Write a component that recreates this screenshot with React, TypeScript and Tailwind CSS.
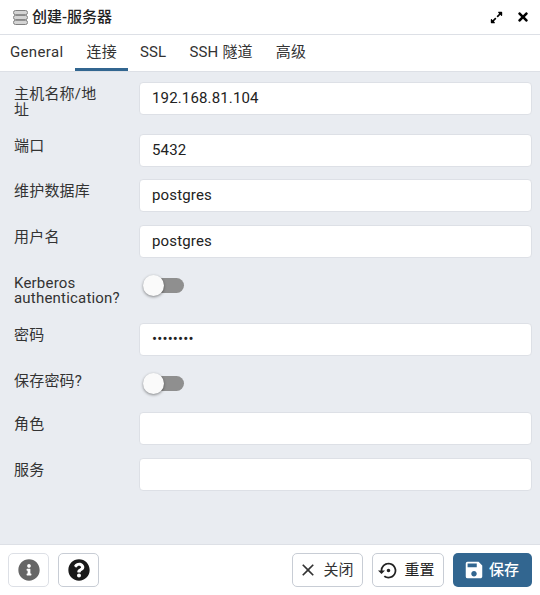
import { useState } from "react";
import { FaExpandAlt, FaTimes, FaInfoCircle, FaQuestionCircle } from "react-icons/fa";
import { MdClose, MdSave, MdSettingsBackupRestore } from "react-icons/md";

const font = "font-['Roboto','Noto_Sans_CJK_SC',sans-serif]";

function Field({ label, value, mb, type = "text" }: { label: string; value?: string; mb: string; type?: string }) {
  return (
    <div className={`flex items-start pl-[14px] pr-2 ${mb}`}>
      <label className="mr-[35px] w-[90px] shrink-0 pt-[4px] text-[15px] leading-[16px] tracking-[0.2px] text-[#333]">{label}</label>
      <input
        readOnly
        type={type}
        value={value ?? ""}
        className="h-[33px] min-w-0 flex-1 rounded-[4px] border border-[#dde0e6] bg-white px-3 pb-[1px] text-[15px] tracking-[0.15px] text-[#222] outline-none"
      />
    </div>
  );
}

function Toggle({ label, mb }: { label: string; mb: string }) {
  return (
    <div className={`flex items-start pl-[14px] pr-2 ${mb}`}>
      <label className="mr-[35px] w-[90px] shrink-0 text-[15px] leading-[15px] tracking-[0.2px] text-[#333]">{label}</label>
      <div className="relative ml-[5px] mt-[2px] h-[15px] w-[40px] rounded-full bg-[#8f8f8f]">
        <span className="absolute left-[-1px] top-[-3px] h-[21px] w-[21px] rounded-full bg-[#fafafa] shadow-[0_1px_3px_rgba(0,0,0,0.45)]" />
      </div>
    </div>
  );
}

function ServerIcon() {
  return (
    <svg width="15" height="15" viewBox="0 0 15 15" className="shrink-0">
      <rect x="0.5" y="0.5" width="14" height="4.2" rx="2" fill="#d4d4d4" stroke="#808080" />
      <rect x="0.5" y="5.4" width="14" height="4.2" rx="2" fill="#d4d4d4" stroke="#808080" />
      <rect x="0.5" y="10.3" width="14" height="4.2" rx="2" fill="#d4d4d4" stroke="#808080" />
    </svg>
  );
}

export default function App() {
  const [tab] = useState("连接");
  const tabs = ["General", "连接", "SSL", "SSH 隧道", "高级"];

  return (
    <div className={`flex h-[595px] w-[540px] flex-col bg-white ${font}`}>
      {/* header */}
      <div className="flex h-[35px] items-center justify-between border-b border-[#dde0e6] pl-[13px] pr-[10px]">
        <div className="flex items-center gap-[4px] text-[15px] font-medium text-[#222]">
          <ServerIcon />
          <span>创建-服务器</span>
        </div>
        <div className="flex items-center gap-[13px] text-black">
          <FaExpandAlt size={13} />
          <FaTimes size={14} />
        </div>
      </div>

      {/* tabs */}
      <div className="flex h-[37px] border-b border-[#dde0e6]">
        {tabs.map((t, i) => (
          <div
            key={t}
            className={`flex items-center whitespace-nowrap px-[11.5px] pb-[2px] text-[15px] tracking-[0.2px] text-[#333] ${
              i === 0 ? "ml-[-1.5px] tracking-[0.35px]" : ""
            } ${t === tab ? "border-b-[3px] border-[#326690] pt-[3px]" : ""}`}
          >
            {t}
          </div>
        ))}
      </div>

      {/* form */}
      <div className="flex flex-1 flex-col bg-[#e9ecf1] pt-[10px]">
        <Field label="主机名称/地址" value="192.168.81.104" mb="mb-[16px]" />
        <Field label="端口" value="5432" mb="mb-[12px]" />
        <Field label="维护数据库" value="postgres" mb="mb-[13px]" />
        <Field label="用户名" value="postgres" mb="mb-[18px]" />
        <Toggle label="Kerberos authentication?" mb="mb-[17px]" />
        <Field label="密码" type="password" value="postgres" mb="mb-[18px]" />
        <Toggle label="保存密码?" mb="mb-[21px]" />
        <Field label="角色" mb="mb-[13px]" />
        <Field label="服务" mb="mb-0" />
      </div>

      {/* footer */}
      <div className="flex h-[51px] items-center justify-between border-t border-[#dde0e6] px-2">
        <div className="flex gap-[9px]">
          <button className="flex h-[34px] w-[41px] items-center justify-center rounded-[5px] border border-[#dde0e6] bg-white text-[#666]">
            <FaInfoCircle size={22} />
          </button>
          <button className="flex h-[34px] w-[41px] items-center justify-center rounded-[5px] border border-[#c8cdd5] bg-white text-[#1a1a1a]">
            <FaQuestionCircle size={22} />
          </button>
        </div>
        <div className="flex gap-[9px]">
          <button className="flex h-[34px] w-[71px] items-center justify-center gap-[5px] rounded-[5px] border border-[#c8cdd5] bg-white pr-[3px] text-[15px] text-[#333]">
            <MdClose size={20} />
            关闭
          </button>
          <button className="flex h-[34px] w-[72px] items-center justify-center gap-[5px] rounded-[5px] border border-[#c8cdd5] bg-white pr-[3px] text-[15px] text-[#222]">
            <MdSettingsBackupRestore size={21} />
            重置
          </button>
          <button className="flex h-[34px] w-[79px] items-center justify-center gap-[4px] rounded-[5px] bg-[#326690] pr-[3px] text-[15px] font-medium text-white">
            <MdSave size={22} />
            保存
          </button>
        </div>
      </div>
    </div>
  );
}
